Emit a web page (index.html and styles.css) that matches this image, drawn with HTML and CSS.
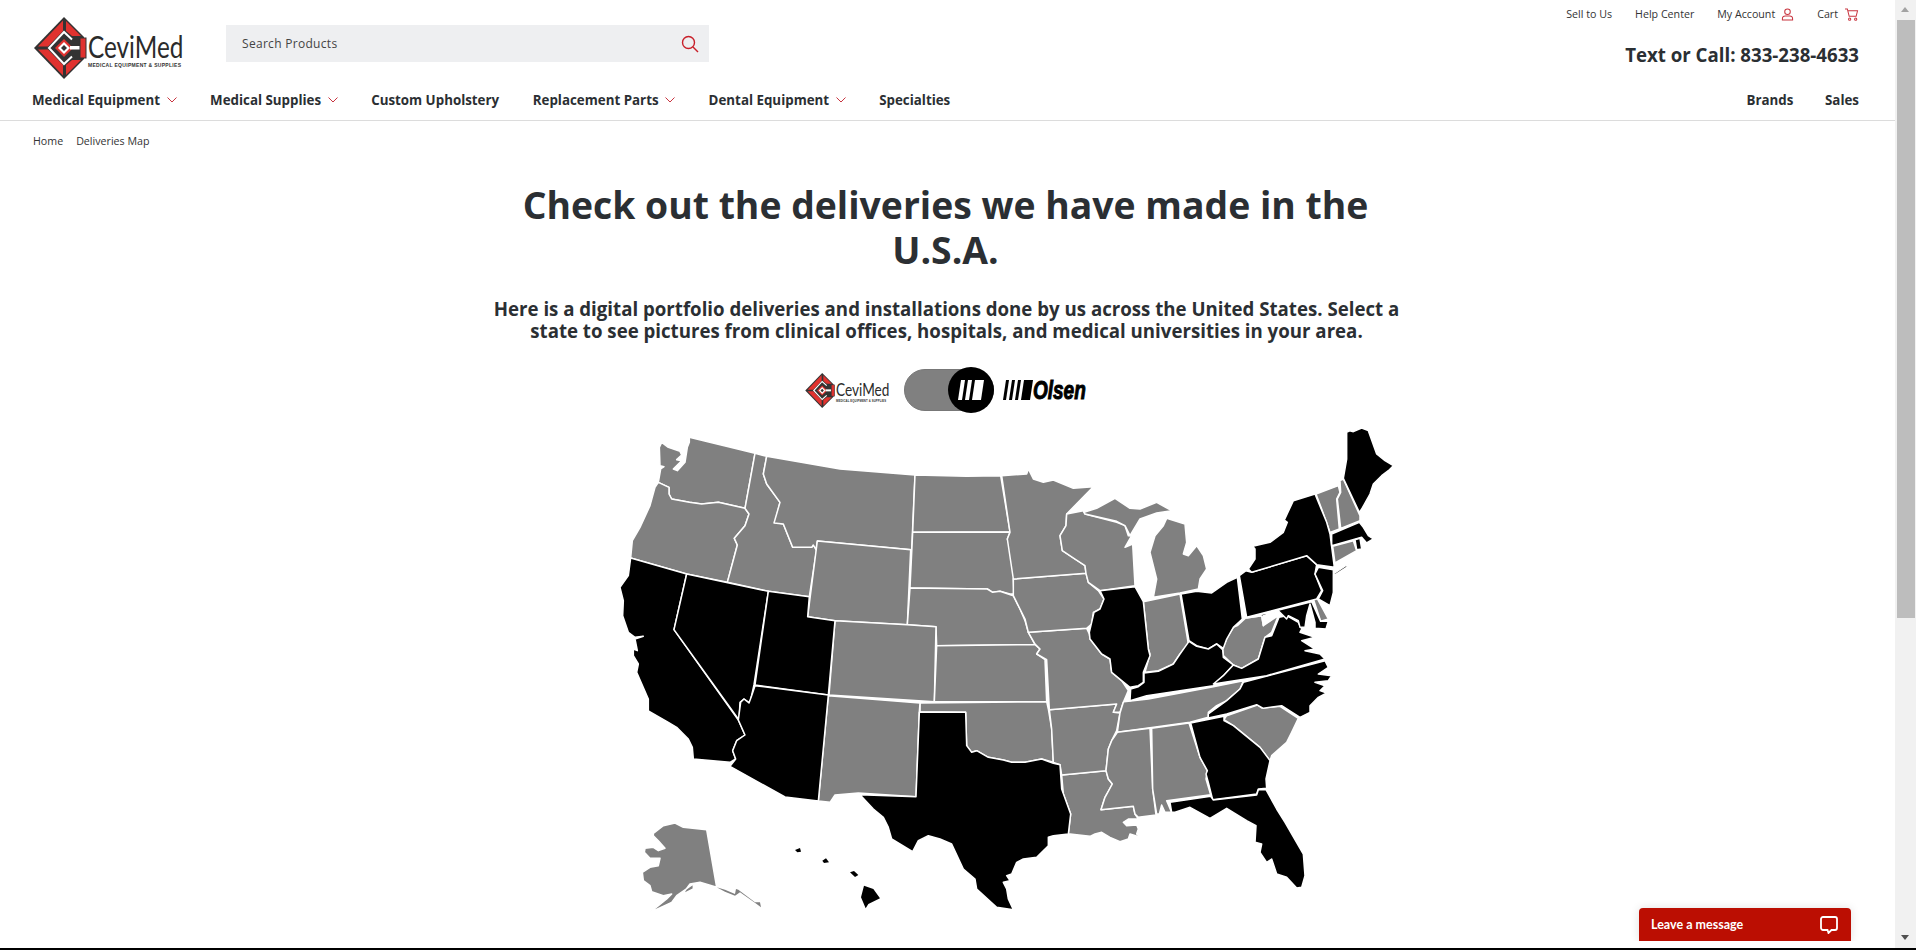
FILE: index.html
```html
<!DOCTYPE html>
<html>
<head>
  <title>Deliveries Map</title>
  <meta name="viewport" content="width=device-width, initial-scale=1.0">
  <link rel="stylesheet" href="styles.css">
</head>
<body>
  <svg class="defs" width="0" height="0">
    <symbol id="diamond" viewBox="0 0 54 62">
      <polygon points="30,0 50,20 50,42 30,62 0,31" fill="#333"/>
      <polygon points="29,3.500 4,29.500 14,29.500 29,14" fill="#e0322f"/>
      <polygon points="32,4 47,19 38,19 32,14" fill="#e0322f"/>
      <polygon points="4,32.500 29,58.500 29,48 14,32.500" fill="#e0322f"/>
      <polygon points="32,58 47,43 38,43 32,48" fill="#e0322f"/>
      <path d="M38 22.500L30 15L15 31L30 47L38 39.500" fill="none" stroke="#fff" stroke-width="2"/>
      <polygon points="30,22 39,31 30,40 21,31" fill="#e0322f"/>
      <polygon points="30,25 36,31 30,37 24,31" fill="#fff"/>
      <polygon points="30,28 33,31 30,34 27,31" fill="#333"/>
      <rect x="36" y="29" width="10" height="3.500" fill="#fff"/>
      <rect x="46" y="21" width="6" height="20" fill="#e0322f" stroke="#333"/>
    </symbol>
  </svg>

  <div class="window">
    <div class="page">
      <header class="header">
        <div class="header-top">
          <div class="logo">
            <svg class="logo-mark"><use href="#diamond"/></svg>
            <div class="logo-words">
              <div class="logo-name">CeviMed</div>
              <div class="logo-sub">MEDICAL EQUIPMENT &amp; SUPPLIES</div>
            </div>
          </div>
          <div class="search">
            <span>Search Products</span>
            <svg class="search-icon" viewBox="0 0 18 18"><circle cx="7.500" cy="7.500" r="6"/><path d="M12 12l5 5"/></svg>
          </div>
          <div class="header-right">
            <div class="top-links">
              <a>Sell to Us</a>
              <a>Help Center</a>
              <a class="with-icon">My Account
                <svg class="top-icon" viewBox="0 0 14 14"><circle cx="7" cy="4" r="3"/><path d="M1.500 13v-1.500a3 3 0 0 1 3-3h5a3 3 0 0 1 3 3V13z"/></svg>
              </a>
              <a class="with-icon">Cart
                <svg class="top-icon cart" viewBox="0 0 15 14"><path d="M0.500 1H3l2 8h7.500l1.500-6H3.500"/><circle cx="5.500" cy="12" r="1.200"/><circle cx="12" cy="12" r="1.200"/></svg>
              </a>
            </div>
            <div class="phone">Text or Call: 833-238-4633</div>
          </div>
        </div>
        <nav class="nav">
          <a>Medical Equipment <svg class="chev" viewBox="0 0 10 6"><path d="M0.500 0.500L5 5l4.500-4.500"/></svg></a>
          <a>Medical Supplies <svg class="chev" viewBox="0 0 10 6"><path d="M0.500 0.500L5 5l4.500-4.500"/></svg></a>
          <a>Custom Upholstery</a>
          <a>Replacement Parts <svg class="chev" viewBox="0 0 10 6"><path d="M0.500 0.500L5 5l4.500-4.500"/></svg></a>
          <a>Dental Equipment <svg class="chev" viewBox="0 0 10 6"><path d="M0.500 0.500L5 5l4.500-4.500"/></svg></a>
          <a>Specialties</a>
          <a class="nav-right">Brands</a>
          <a>Sales</a>
        </nav>
      </header>

      <div class="crumbs"><a>Home</a><a>Deliveries Map</a></div>

      <main class="content">
        <h1>Check out the deliveries we have made in the U.S.A.</h1>
        <p class="intro">Here is a digital portfolio deliveries and installations done by us across the United States. Select a state to see pictures from clinical offices, hospitals, and medical universities in your area.</p>

        <div class="brand-switch">
          <div class="logo logo-small">
            <svg class="logo-mark"><use href="#diamond"/></svg>
            <div class="logo-words">
              <div class="logo-name">CeviMed</div>
              <div class="logo-sub">MEDICAL EQUIPMENT &amp; SUPPLIES</div>
            </div>
          </div>
          <div class="toggle">
            <div class="knob">
              <svg viewBox="0 0 26 20" width="26" height="20"><polygon points="3,0 7,0 4,20 0,20"/><polygon points="10,0 14,0 11,20 7,20"/><polygon points="17,0 26,0 23,20 14,20"/></svg>
            </div>
          </div>
          <div class="olsen">
            <svg viewBox="0 0 30 20" width="30" height="20"><polygon points="3,0 6,0 3,20 0,20"/><polygon points="9,0 12,0 9,20 6,20"/><polygon points="15,0 18,0 15,20 12,20"/><polygon points="21,0 30,0 27,20 18,20"/></svg>
            <span class="olsen-name">Olsen</span>
          </div>
        </div>

        <svg class="map" viewBox="-300 0 2685 1560">
          <g class="gray">
            <polygon points="268,55 465,103 435,268 355,250 305,255 268,250 215,240 207,225 207,205 175,190 182,150 192,143 180,140 178,85 185,70 205,85 240,97 245,108 230,122 245,125 220,150 232,155 255,130 262,85 268,70"/>
            <polygon points="175,190 207,205 207,225 215,240 268,250 305,255 355,250 435,268 447,285 435,320 403,358 412,378 382,490 260,465 92,417 97,365 120,325 150,260 165,205"/>
            <polygon points="465,103 500,112 490,165 500,195 540,250 525,310 550,315 578,385 635,385 640,378 650,392 628,533 505,517 382,490 412,378 403,358 435,320 447,285 435,268"/>
            <polygon points="500,112 720,150 945,168 935,392 652,366 648,392 640,378 635,385 578,385 550,315 522,312 540,250 500,195 490,165"/>
            <polygon points="652,366 932,392 922,617 705,605 623,593"/>
            <polygon points="945,168 1100,172 1202,170 1230,338 938,340"/>
            <polygon points="938,340 1230,340 1222,360 1235,400 1245,478 1240,480 1242,525 1230,525 1200,517 1178,520 1162,510 930,507"/>
            <polygon points="930,507 1162,510 1178,520 1200,517 1240,530 1260,570 1275,605 1285,640 1305,677 1010,680 1008,623 922,617"/>
            <polygon points="705,605 922,617 1008,623 1003,848 687,828"/>
            <polygon points="1010,680 1305,677 1320,690 1310,705 1335,722 1340,848 1003,848"/>
            <polygon points="960,852 1340,848 1345,870 1355,930 1360,1030 1325,1020 1275,1030 1235,1030 1210,1023 1165,1015 1130,995 1115,1000 1100,980 1097,880 960,878"/>
            <polygon points="685,830 960,852 958,878 948,1133 775,1122 705,1128 690,1150 655,1146"/>
            <polygon points="1385,1068 1518,1055 1525,1080 1537,1095 1515,1135 1503,1172 1600,1162 1605,1185 1615,1200 1585,1200 1570,1210 1580,1220 1610,1218 1615,1230 1610,1245 1638,1260 1590,1245 1585,1260 1560,1268 1530,1255 1505,1240 1485,1245 1470,1252 1410,1245 1405,1245 1412,1185 1390,1125"/>
            <polygon points="1348,872 1550,855 1540,880 1560,882 1550,935 1535,965 1525,990 1518,1055 1385,1068 1380,1037 1360,1030 1355,930"/>
            <polygon points="1285,640 1460,628 1468,645 1470,660 1505,705 1530,720 1535,760 1565,785 1585,815 1570,850 1560,880 1540,880 1550,855 1348,872 1340,722 1310,705 1320,690 1305,675"/>
            <polygon points="1240,480 1458,463 1465,490 1495,515 1512,540 1500,570 1480,580 1475,615 1460,628 1285,640 1275,600 1260,570 1240,530"/>
            <polygon points="1205,170 1280,165 1285,150 1300,180 1330,190 1360,183 1420,208 1480,203 1400,285 1398,320 1380,350 1387,395 1425,420 1455,440 1458,463 1240,480 1222,360 1230,340"/>
            <polygon points="1400,285 1450,275 1455,285 1550,310 1575,320 1585,350 1595,350 1575,385 1598,375 1605,500 1500,515 1465,490 1458,463 1455,440 1425,420 1387,395 1380,350 1398,320"/>
            <polygon points="1452,280 1490,268 1545,238 1590,268 1620,270 1670,250 1715,275 1670,282 1620,300 1590,350 1575,320 1550,307 1455,285"/>
            <polygon points="1700,298 1755,315 1760,370 1750,405 1765,410 1790,380 1810,410 1820,450 1800,480 1795,510 1740,522 1660,535 1670,480 1650,400 1665,350 1690,320"/>
            <polygon points="1630,548 1740,525 1765,675 1740,705 1720,735 1675,755 1635,760 1650,705 1645,690"/>
            <polygon points="1572,848 1645,840 1840,803 1930,785 1920,810 1880,845 1850,860 1825,880 1825,895 1770,910 1552,940 1560,882 1570,850"/>
            <polygon points="1552,940 1650,928 1658,1110 1668,1188 1615,1195 1605,1185 1600,1162 1503,1172 1515,1135 1537,1095 1525,1080 1518,1055 1525,990 1535,965"/>
            <polygon points="1655,928 1767,912 1800,1015 1822,1055 1818,1080 1832,1127 1700,1145 1715,1180 1695,1180 1685,1158 1678,1185 1670,1185 1658,1110"/>
            <polygon points="1880,890 1972,858 1985,867 2040,862 2095,898 2075,940 2060,970 2015,1010 2010,1025 1980,985 1900,920 1872,902"/>
            <polygon points="1912,620 1937,597 1985,590 1990,620 2035,590 2015,640 1995,655 1975,720 1925,748 1900,738 1870,710 1868,688 1880,660 1900,625"/>
            <polygon points="2140,540 2150,535 2185,600 2162,607"/>
            <polygon points="2148,225 2215,200 2220,220 2210,240 2218,330 2190,340 2165,270"/>
            <polygon points="2220,185 2230,180 2280,290 2280,305 2222,328 2212,240 2222,220"/>
            <polygon points="2198,382 2260,365 2270,395 2205,432"/>
            <polygon points="160,1243 190,1220 225,1212 250,1225 320,1232 350,1405 300,1390 270,1395 255,1415 250,1425 280,1410 280,1395 230,1430 215,1450 150,1480 200,1440 215,1425 190,1430 155,1418 150,1400 130,1385 127,1360 150,1345 175,1340 180,1318 150,1318 133,1300 135,1288 160,1285 175,1295 195,1288 175,1265 160,1250"/>
            <polygon class="thin" points="350,1405 375,1412 405,1425 408,1410 415,1412 465,1450 480,1450 483,1465 470,1455 420,1420 405,1430 375,1418"/>
          </g>
          <g class="black">
            <polygon points="92,417 260,465 222,632 415,903 435,948 410,965 398,995 407,1020 390,1030 280,1020 277,985 265,960 230,925 205,910 145,876 145,840 110,760 115,735 100,710 100,690 112,695 105,660 130,652 105,655 85,640 68,590 70,545 60,505 85,470"/>
            <polygon points="260,465 505,517 462,797 450,852 432,840 420,850 417,903 222,632"/>
            <polygon points="505,517 628,533 623,593 705,605 685,828 465,798"/>
            <polygon points="465,800 685,828 655,1146 555,1134 390,1042 407,1020 398,995 410,965 435,948 415,903 422,850 432,840 447,852 455,830"/>
            <polygon points="958,880 1097,880 1100,980 1115,1000 1130,995 1165,1015 1210,1023 1235,1030 1275,1030 1325,1020 1360,1033 1380,1037 1385,1110 1412,1185 1405,1245 1360,1250 1345,1255 1345,1280 1310,1315 1270,1320 1250,1330 1235,1365 1220,1370 1230,1385 1210,1390 1220,1410 1225,1440 1240,1472 1190,1465 1130,1410 1125,1380 1090,1350 1055,1275 1020,1260 985,1250 955,1265 938,1298 875,1260 865,1225 850,1195 820,1170 780,1127 948,1133"/>
            <polygon points="1500,515 1605,503 1630,548 1645,690 1650,710 1630,760 1630,790 1615,800 1590,805 1565,785 1535,760 1530,720 1505,705 1470,660 1468,640 1482,580 1500,570 1512,540"/>
            <polygon points="1743,525 1790,517 1835,522 1880,490 1912,475 1927,600 1900,625 1880,660 1870,688 1850,675 1825,690 1790,680 1767,665"/>
            <polygon points="1767,667 1790,682 1825,690 1850,675 1868,692 1870,715 1900,738 1870,770 1840,800 1640,830 1590,845 1592,810 1615,803 1632,790 1632,762 1675,757 1720,735 1740,705"/>
            <polygon points="1772,912 1872,892 1872,905 1900,920 1980,985 2010,1025 1998,1080 2000,1108 1975,1110 1970,1125 1838,1142 1825,1090 1818,1065 1822,1055 1800,1015"/>
            <polygon points="1710,1150 1832,1132 1840,1143 1970,1128 1975,1112 1998,1112 2030,1170 2055,1210 2110,1305 2115,1370 2105,1405 2090,1407 2060,1375 2030,1365 2015,1320 2000,1330 1980,1300 1985,1275 1965,1270 1968,1220 1940,1205 1880,1168 1830,1198 1770,1165 1725,1180 1715,1180"/>
            <polygon points="1930,790 2175,725 2185,745 2155,765 2195,770 2185,785 2145,790 2175,800 2160,815 2180,822 2155,835 2130,860 2130,880 2100,895 2045,860 1990,868 1970,857 1880,885 1825,897 1825,885 1880,845 1920,810"/>
            <polygon points="1840,795 1870,770 1900,738 1925,748 1975,720 1995,655 2015,650 2037,595 2060,590 2095,610 2105,630 2100,640 2145,655 2105,665 2145,690 2115,695 2160,705 2175,720 2000,770"/>
            <polygon points="1918,470 1938,455 1955,460 2120,410 2150,437 2145,465 2165,515 2150,540 1940,595"/>
            <polygon points="1945,450 1965,420 1965,390 1958,382 2010,370 2050,340 2062,310 2053,303 2080,245 2145,225 2180,310 2190,345 2203,445 2150,437 2120,410 1955,460"/>
            <polygon points="2200,465 2245,435 2240,445 2205,468"/>
            <polygon points="2155,445 2200,452 2200,480 2200,520 2190,560 2155,540 2168,515 2145,465"/>
            <polygon points="1940,597 2135,548 2162,607 2185,607 2178,630 2145,628 2145,610 2130,555 2120,590 2115,625 2100,625 2095,605 2065,590 2060,600 2035,575 1990,590 1990,620 1985,590"/>
            <polygon points="2230,178 2240,120 2240,40 2250,35 2260,38 2285,27 2305,35 2330,105 2355,125 2380,140 2365,155 2345,170 2320,195 2310,225 2285,270 2278,280"/>
            <polygon points="2195,345 2278,310 2290,325 2305,350 2320,360 2300,372 2285,355 2195,380"/>
            <polygon points="2265,362 2280,358 2285,390 2270,392"/>
            <polygon class="thin" points="585,1293 600,1287 603,1298 592,1300"/>
            <polygon class="thin" points="667,1325 678,1318 687,1330 672,1332"/>
            <polygon class="thin" points="750,1360 762,1356 775,1368 765,1374"/>
            <polygon class="thin" points="792,1400 820,1410 840,1438 805,1455 797,1468 783,1435"/>
          </g>
        </svg>
      </main>

      <div class="chat">
        <span>Leave a message</span>
        <svg class="chat-icon" viewBox="0 0 18 18"><path d="M3 1h12a2 2 0 0 1 2 2v9a2 2 0 0 1-2 2h-3.500L8.500 17l-1-3H3a2 2 0 0 1-2-2V3a2 2 0 0 1 2-2z"/></svg>
      </div>
    </div>

    <div class="scrollbar">
      <div class="arrow-up"></div>
      <div class="thumb"></div>
      <div class="arrow-down"></div>
    </div>
  </div>
  <div class="bottom-bar"></div>
</body>
</html>
```

FILE: styles.css
```css
* {
  box-sizing: border-box;
}

body {
  margin: 0;
  height: 100vh;
  overflow: hidden;
  display: flex;
  flex-direction: column;
  font-family: "Open Sans", "Liberation Sans", sans-serif;
  color: #2b2f33;
  background: #fff;
}

.defs {
  position: absolute;
}

.window {
  flex: 1;
  display: flex;
  min-height: 0;
}

.page {
  flex: 1;
  position: relative;
  overflow: hidden;
}

.bottom-bar {
  height: 2px;
  background: #000;
}

/* header */
.header {
  height: 121px;
  border-bottom: 1px solid #dcdcdc;
  padding: 0 36px 0 32px;
}

.header-top {
  display: flex;
  height: 82px;
}

/* logo, full size is 148x62 */
.logo {
  flex: none;
  display: flex;
  width: 148px;
  height: 62px;
  margin: 17px 0 0 2px;
}

.logo-mark {
  flex: none;
  width: 54px;
  height: 62px;
}

.logo-words {
  width: 94px;
  padding-top: 16px;
  white-space: nowrap;
}

.logo-name {
  width: 94px;
  font-family: Lato, sans-serif;
  font-size: 30px;
  line-height: 26px;
  color: #2b2b2b;
  transform: scaleX(0.81);
  transform-origin: left;
}

.logo-sub {
  width: 94px;
  margin-top: 3px;
  font-family: "Liberation Sans", sans-serif;
  font-weight: 700;
  font-size: 5px;
  letter-spacing: 0.3px;
  line-height: 6px;
  color: #333;
}

.logo-small {
  width: 84px;
  height: 35px;
  margin: 0;
}

.logo-small .logo-mark {
  width: 31px;
  height: 35px;
}

.logo-small .logo-words {
  width: 53px;
  padding-top: 9px;
}

.logo-small .logo-name {
  width: 53px;
  font-size: 17px;
  line-height: 15px;
  transform: scaleX(0.8);
}

.logo-small .logo-sub {
  width: 53px;
  margin-top: 2px;
  font-size: 2.800px;
  letter-spacing: 0.1px;
  line-height: 4px;
}

.search {
  width: 483px;
  height: 37px;
  margin: 25px 0 0 44px;
  padding: 0 10px 0 16px;
  display: flex;
  align-items: center;
  justify-content: space-between;
  background: #eeeff1;
  font-size: 12px;
  letter-spacing: 0.3px;
  color: #444;
}

.search-icon {
  width: 18px;
  height: 18px;
  fill: none;
  stroke: #c8202a;
  stroke-width: 1.400;
}

.header-right {
  margin-left: auto;
  display: flex;
  flex-direction: column;
  align-items: flex-end;
}

.top-links {
  display: flex;
  align-items: center;
  gap: 23px;
  height: 28px;
  font-size: 10.670px;
  color: #333;
}

.with-icon {
  display: flex;
  align-items: center;
  gap: 6px;
}

.top-icon {
  width: 13px;
  height: 13px;
  fill: none;
  stroke: #c8343f;
  stroke-width: 1.100;
}

.cart {
  width: 15px;
}

.phone {
  margin-top: 13px;
  font-size: 18.670px;
  font-weight: 700;
  line-height: 28px;
}

.nav {
  display: flex;
  align-items: center;
  gap: 33.600px;
  height: 36px;
  font-size: 13.330px;
  font-weight: 700;
}

.nav a {
  white-space: nowrap;
}

.nav-right {
  margin: 0 -2px 0 auto;
}

.chev {
  width: 10px;
  height: 6px;
  margin: 0 0 2px 3px;
  fill: none;
  stroke: #c8343f;
  stroke-width: 1;
}

.crumbs {
  display: flex;
  gap: 13px;
  padding: 12px 33px 0;
  font-size: 10.670px;
  line-height: 16px;
  color: #333;
}

/* main column */
.content {
  display: flex;
  flex-direction: column;
  align-items: center;
}

h1 {
  width: 900px;
  margin: 33px 4px 0 0;
  font-size: 37.330px;
  font-weight: 700;
  line-height: 45px;
  text-align: center;
}

.intro {
  width: 925px;
  margin: 26px 2px 0 0;
  font-size: 18.670px;
  font-weight: 700;
  line-height: 22px;
  text-align: center;
}

.brand-switch {
  display: flex;
  align-items: center;
  height: 46px;
  margin: 25px 4px 0 0;
}

.toggle {
  width: 90px;
  height: 42px;
  margin: 0 9px 0 15px;
  display: flex;
  align-items: center;
  justify-content: flex-end;
  background: #808080;
  border: 1px solid #777;
  border-radius: 21px;
}

.knob {
  flex: none;
  width: 46px;
  height: 46px;
  margin-right: -1px;
  display: flex;
  align-items: center;
  justify-content: center;
  background: #000;
  border-radius: 50%;
}

.knob svg {
  fill: #fff;
}

.olsen {
  display: flex;
  align-items: center;
  width: 83px;
  height: 20px;
  fill: #000;
}

.olsen-name {
  width: 53px;
  font-family: "Liberation Sans", sans-serif;
  font-weight: 700;
  font-style: italic;
  font-size: 25px;
  line-height: 20px;
  color: #000;
  -webkit-text-stroke: 1px #000;
  transform: scaleX(0.76);
  transform-origin: left;
  white-space: nowrap;
}

.map {
  width: 895px;
  height: 520px;
  margin-top: 6px;
  flex: none;
}

.gray polygon {
  fill: #808080;
  stroke: #fff;
  stroke-width: 4.500;
  stroke-linejoin: round;
}

.black polygon {
  fill: #000;
  stroke: #fff;
  stroke-width: 4.500;
  stroke-linejoin: round;
}

.map .thin {
  stroke-width: 0;
}

/* chat */
.chat {
  position: absolute;
  right: 44px;
  bottom: 7px;
  width: 212px;
  height: 33px;
  padding: 0 13px 0 12px;
  display: flex;
  align-items: center;
  justify-content: space-between;
  background: #bb0e02;
  border-radius: 4px 4px 0 0;
  box-shadow: 0 0 10px rgba(0, 0, 0, 0.12);
  clip-path: inset(-12px -12px 0 -12px);
  color: #fff;
  font-family: Lato, sans-serif;
  font-size: 12.500px;
  font-weight: 700;
}

.chat-icon {
  width: 18px;
  height: 18px;
  fill: none;
  stroke: #fff;
  stroke-width: 1.800;
}

/* fake scrollbar */
.scrollbar {
  width: 21px;
  background: #f1f1f1;
  position: relative;
}

.thumb {
  position: absolute;
  top: 20px;
  left: 2px;
  width: 18px;
  height: 598px;
  background: #bdbdbd;
}

.arrow-up,
.arrow-down {
  position: absolute;
  left: 6px;
  border-left: 4.500px solid transparent;
  border-right: 4.500px solid transparent;
}

.arrow-up {
  top: 7px;
  border-bottom: 5px solid #a3a3a3;
}

.arrow-down {
  bottom: 8px;
  border-top: 5px solid #505050;
}
```
